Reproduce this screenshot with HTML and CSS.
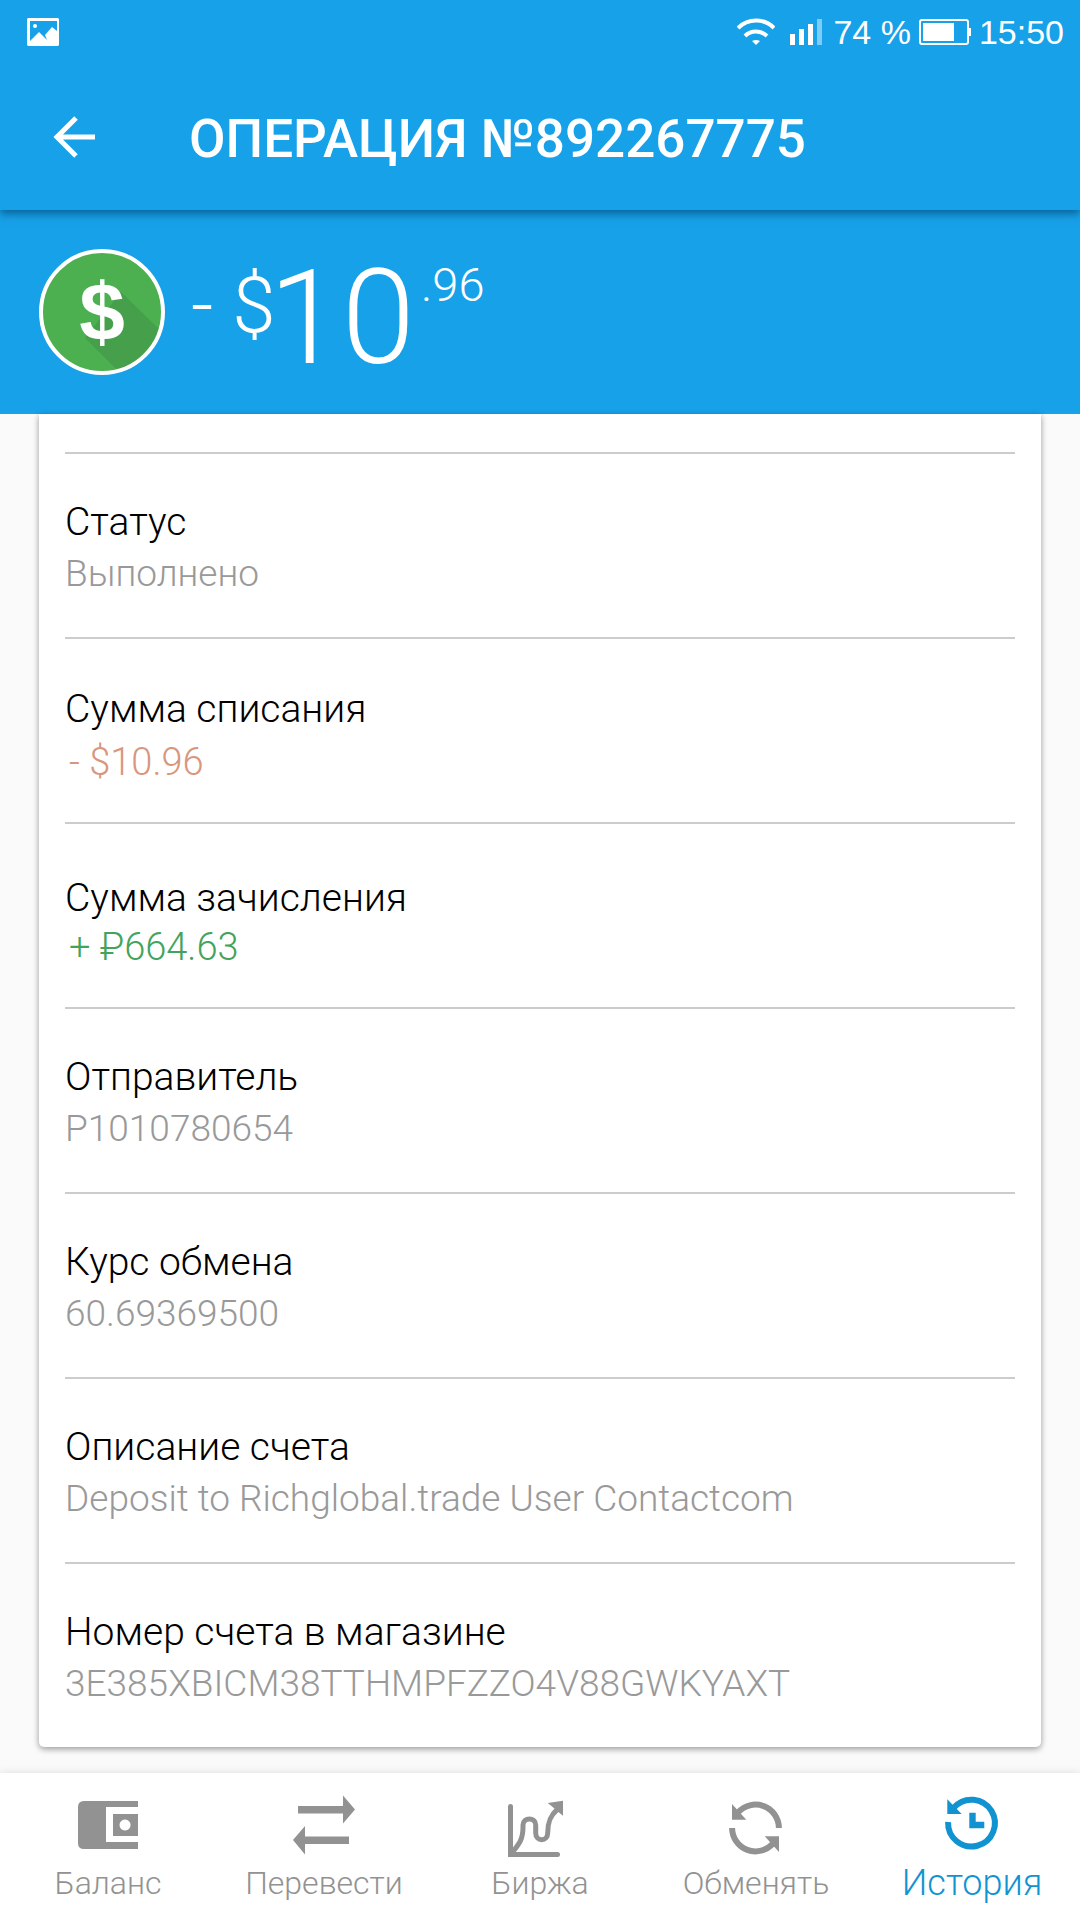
FILE: index.html
```html
<!DOCTYPE html>
<html lang="ru">
<head>
	<meta charset="utf-8">
	<meta name="viewport" content="width=device-width, initial-scale=1">
	<title>Операция №892267775</title>
	<link rel="stylesheet" href="styles.css">
</head>
<body>
<div class="statusbar">
	<svg class="picture" width="32" height="28" viewBox="0 0 32 28">
		<path fill="#fff" fill-rule="evenodd" d="M1 0h30l1 1v26l-1 1H1l-1-1V1zM3 3v20l9-9 8 8-2-5 7-8 5 4V3z"/>
		<circle cx="8" cy="8" r="2" fill="#fff"/>
	</svg>
	<svg class="wifi" width="38" height="28" viewBox="0 0 38 28">
		<path fill="none" stroke="#fff" stroke-width="4" d="M1 10C11 0 27 0 37 10M8 18C14 12 24 12 30 18"/>
		<path fill="#fff" d="M15 23q4-2 8 0l-4 4z"/>
	</svg>
	<svg class="signal" width="32" height="26" viewBox="0 0 32 26">
		<path fill="#fff" d="M0 15h5v11H0zM9 10h5v16H9zM18 5h5v21h-5z"/>
		<path fill="#80ccf8" d="M27 0h5v26h-5z"/>
	</svg>
	<span>74 %</span>
	<svg class="battery" width="52" height="26" viewBox="0 0 52 26">
		<rect x="1" y="1" width="48" height="24" rx="2" fill="none" stroke="#fff" stroke-width="2"/>
		<path fill="#fff" d="M4 4h31v18H4zM49 9h3v8h-3z"/>
	</svg>
	<span>15:50</span>
</div>

<header class="toolbar">
	<button class="back" aria-label="Назад">
		<svg width="42" height="42" viewBox="0 0 42 42"><path fill="none" stroke="#fff" stroke-width="5" d="M23 2L4 21l19 19M4 21h38"/></svg>
	</button>
	<h1>ОПЕРАЦИЯ №892267775</h1>
</header>

<section class="total">
	<svg class="coin" width="126" height="126" viewBox="0 0 126 126">
		<circle cx="63" cy="63" r="61" fill="#4caf50"/>
		<path fill="#46a04b" d="M82 43l38 37q-11 33-42 41L46 89z"/>
		<circle cx="63" cy="63" r="61" fill="none" stroke="#fff" stroke-width="4"/>
		<text class="coin-sign" x="63" y="91" text-anchor="middle">$</text>
	</svg>
	<div class="sum">
		<span class="sum-sign">- $</span><span class="sum-main">10</span><span class="sum-cents">.96</span>
	</div>
</section>

<main>
	<dl class="card">
		<div class="row">
			<dt>Статус</dt>
			<dd>Выполнено</dd>
		</div>
		<div class="row amount">
			<dt>Сумма списания</dt>
			<dd class="minus">- $10.96</dd>
		</div>
		<div class="row amount income">
			<dt>Сумма зачисления</dt>
			<dd class="plus">+ ₽664.63</dd>
		</div>
		<div class="row">
			<dt>Отправитель</dt>
			<dd>P1010780654</dd>
		</div>
		<div class="row">
			<dt>Курс обмена</dt>
			<dd>60.69369500</dd>
		</div>
		<div class="row">
			<dt>Описание счета</dt>
			<dd>Deposit to Richglobal.trade User Contactcom</dd>
		</div>
		<div class="row">
			<dt>Номер счета в магазине</dt>
			<dd>3E385XBICM38TTHMPFZZO4V88GWKYAXT</dd>
		</div>
	</dl>
</main>

<nav class="tabs">
	<a href="#balance">
		<svg width="64" height="64" viewBox="0 0 64 64">
			<path fill="currentColor" d="M8 7h54v6H30v35h32v7H8q-6 0-6-6V13q0-6 6-6z"/>
			<path fill="currentColor" fill-rule="evenodd" d="M37 20h25v22H37zM49 25.500a5.500 5.500 0 1 0 .1 0z"/>
		</svg>
		Баланс
	</a>
	<a href="#transfer">
		<svg width="64" height="64" viewBox="0 0 64 64">
			<path fill="currentColor" d="M6 12h45V1.500l12 14-12 14V19.500H6zM57 42.500v7.500H13v10.500L1 46l12-14v10.500z"/>
		</svg>
		Перевести
	</a>
	<a href="#market">
		<svg width="64" height="64" viewBox="0 0 64 64">
			<path fill="none" stroke="currentColor" stroke-width="5" stroke-linecap="round" d="M2.500 12.500v48h47"/>
			<path fill="currentColor" d="M0 55h5v8H0zM55 6.700L39.700 9l5 4 5 4.500 5.300 4.200z"/>
			<path fill="none" stroke="currentColor" stroke-width="5" d="M3 60C11 50 15 46 15 33v-2c0-8 12.700-8 12.700 0v8c0 9 12 9 12 0 0-10 2-17 9.500-23.500"/>
		</svg>
		Биржа
	</a>
	<a href="#exchange">
		<svg width="64" height="64" viewBox="0 0 64 64">
			<path fill="none" stroke="currentColor" stroke-width="6" d="M54.900 34A23.400 23.400 0 0 0 14 18.500M8.100 34A23.400 23.400 0 0 0 49 49.500"/>
			<path fill="currentColor" d="M8 10v15.700h14.300zM55 58V42.300H40.700z"/>
		</svg>
		Обменять
	</a>
	<a href="#history" class="active">
		<svg width="64" height="64" viewBox="0 0 64 64">
			<path fill="none" stroke="currentColor" stroke-width="6" d="M8.100 28A23.400 23.400 0 1 0 14 13.500"/>
			<path fill="currentColor" d="M7.300 5.300V20h14.400zM29.300 18.700h6.400v9h8.600v6.600h-15z"/>
		</svg>
		История
	</a>
</nav>
</body>
</html>
```

FILE: styles.css
```css
* {box-sizing: border-box;}
body {
	margin: 0;
	min-height: 100vh;
	display: flex;
	flex-direction: column;
	background: #fafafa;
	color: #000;
	font-family: Roboto, sans-serif;
	font-weight: 300;
}
svg {display: block; flex: none;}

.statusbar {
	position: relative;
	z-index: 2;
	display: flex;
	align-items: center;
	height: 64px;
	padding: 0 16px 0 27px;
	background: #17a1e9;
	color: #fff;
	font-family: "Liberation Sans", sans-serif;
	font-size: 34px;
	font-weight: 400;
}
.picture {margin-right: auto;}
.signal {margin: 0 11px 0 15px;}
.battery {margin: 0 8px;}

.toolbar {
	position: relative;
	display: flex;
	align-items: center;
	height: 146px;
	padding: 0 53px;
	background: #17a1e9;
	color: #fff;
	box-shadow: 0 4px 8px rgba(0,60,100,.6);
}
.back {
	padding: 0;
	border: 0;
	background: none;
	cursor: pointer;
}
h1 {
	margin: 0 0 0 94px;
	padding-top: 3px;
	font-size: 53px;
	font-weight: 500;
}

.total {
	display: flex;
	align-items: flex-start;
	height: 204px;
	padding: 39px 39px 0;
	background: #17a1e9;
	color: #fff;
}
.coin-sign {
	fill: #fff;
	font-family: "Liberation Sans", sans-serif;
	font-size: 82px;
	font-weight: 700;
}
.sum {
	display: flex;
	align-items: flex-start;
	margin-left: 26px;
}
.sum-sign {font-size: 78px; line-height: 114px;}
.sum-main {margin-left: -7px; font-size: 132px; line-height: 139px;}
.sum-cents {margin-left: 6px; font-size: 47px; line-height: 72px;}

main {
	flex: 1;
	padding: 0 39px 26px;
}
.card {
	margin: 0;
	padding: 38px 26px 0;
	background: #fff;
	border-radius: 0 0 5px 5px;
	box-shadow: 0 2px 6px rgba(0,0,0,.4);
}
.row {
	height: 185px;
	padding-top: 43px;
	border-top: 2px solid #ccc;
}
dt {
	font-size: 39px;
	line-height: 51px;
}
dd {
	margin: 0;
	color: #999;
	font-size: 37px;
	line-height: 51px;
}
.amount {padding-top: 45px;}
.amount dd {
	padding-left: 4px;
	font-size: 38px;
	line-height: 54px;
}
.income {padding-top: 49px;}
.income dd {line-height: 46px;}
.amount .minus {color: #d9967d;}
.amount .plus {color: #43a35c;}

.tabs {
	position: relative;
	display: flex;
	height: 147px;
	background: #fff;
	box-shadow: 0 0 8px rgba(0,0,0,.12);
}
.tabs a {
	flex: 1;
	display: flex;
	flex-direction: column;
	align-items: center;
	padding-top: 21px;
	color: #929292;
	font-size: 32px;
	line-height: 50px;
	text-decoration: none;
}
.tabs .active {
	color: #1193d2;
	font-size: 36px;
}
```
